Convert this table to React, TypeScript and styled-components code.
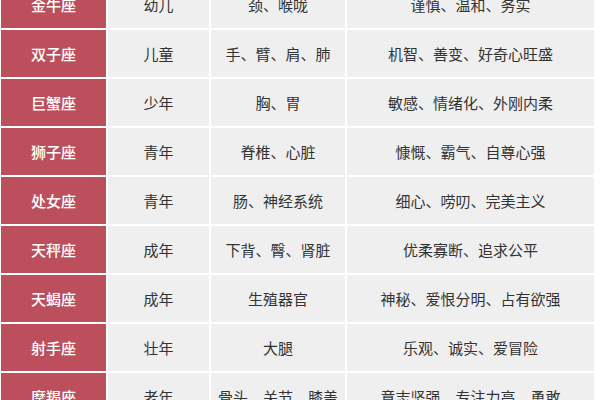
import React from "react";
import styled, { createGlobalStyle } from "styled-components";

const Global = createGlobalStyle`
  html, body { margin: 0; padding: 0; background: #ffffff; }
  body { width: 600px; height: 400px; overflow: hidden; }
`;

const Table = styled.div`
  display: grid;
  grid-template-columns: 105px 101px 134px 247px;
  grid-auto-rows: 47px;
  gap: 2px;
  margin: -19px 0 0 1px;
  font-family: "Noto Sans CJK SC", "Noto Sans", sans-serif;
  font-size: 15px;
`;

const Cell = styled.div<{ $head?: boolean }>`
  display: flex;
  align-items: center;
  justify-content: center;
  background: ${(p) => (p.$head ? "#bb505c" : "#efefef")};
  color: ${(p) => (p.$head ? "#ffffff" : "#333333")};
  font-weight: ${(p) => (p.$head ? 500 : 400)};
  white-space: nowrap;
`;

const rows: [string, string, string, string][] = [
  ["金牛座", "幼儿", "颈、喉咙", "谨慎、温和、务实"],
  ["双子座", "儿童", "手、臂、肩、肺", "机智、善变、好奇心旺盛"],
  ["巨蟹座", "少年", "胸、胃", "敏感、情绪化、外刚内柔"],
  ["狮子座", "青年", "脊椎、心脏", "慷慨、霸气、自尊心强"],
  ["处女座", "青年", "肠、神经系统", "细心、唠叨、完美主义"],
  ["天秤座", "成年", "下背、臀、肾脏", "优柔寡断、追求公平"],
  ["天蝎座", "成年", "生殖器官", "神秘、爱恨分明、占有欲强"],
  ["射手座", "壮年", "大腿", "乐观、诚实、爱冒险"],
  ["摩羯座", "老年", "骨头、关节、膝盖", "意志坚强、专注力高、勇敢"],
];

export default function App() {
  return (
    <>
      <Global />
      <Table>
        {rows.map((r) => (
          <React.Fragment key={r[0]}>
            <Cell $head>{r[0]}</Cell>
            <Cell>{r[1]}</Cell>
            <Cell>{r[2]}</Cell>
            <Cell>{r[3]}</Cell>
          </React.Fragment>
        ))}
      </Table>
    </>
  );
}
